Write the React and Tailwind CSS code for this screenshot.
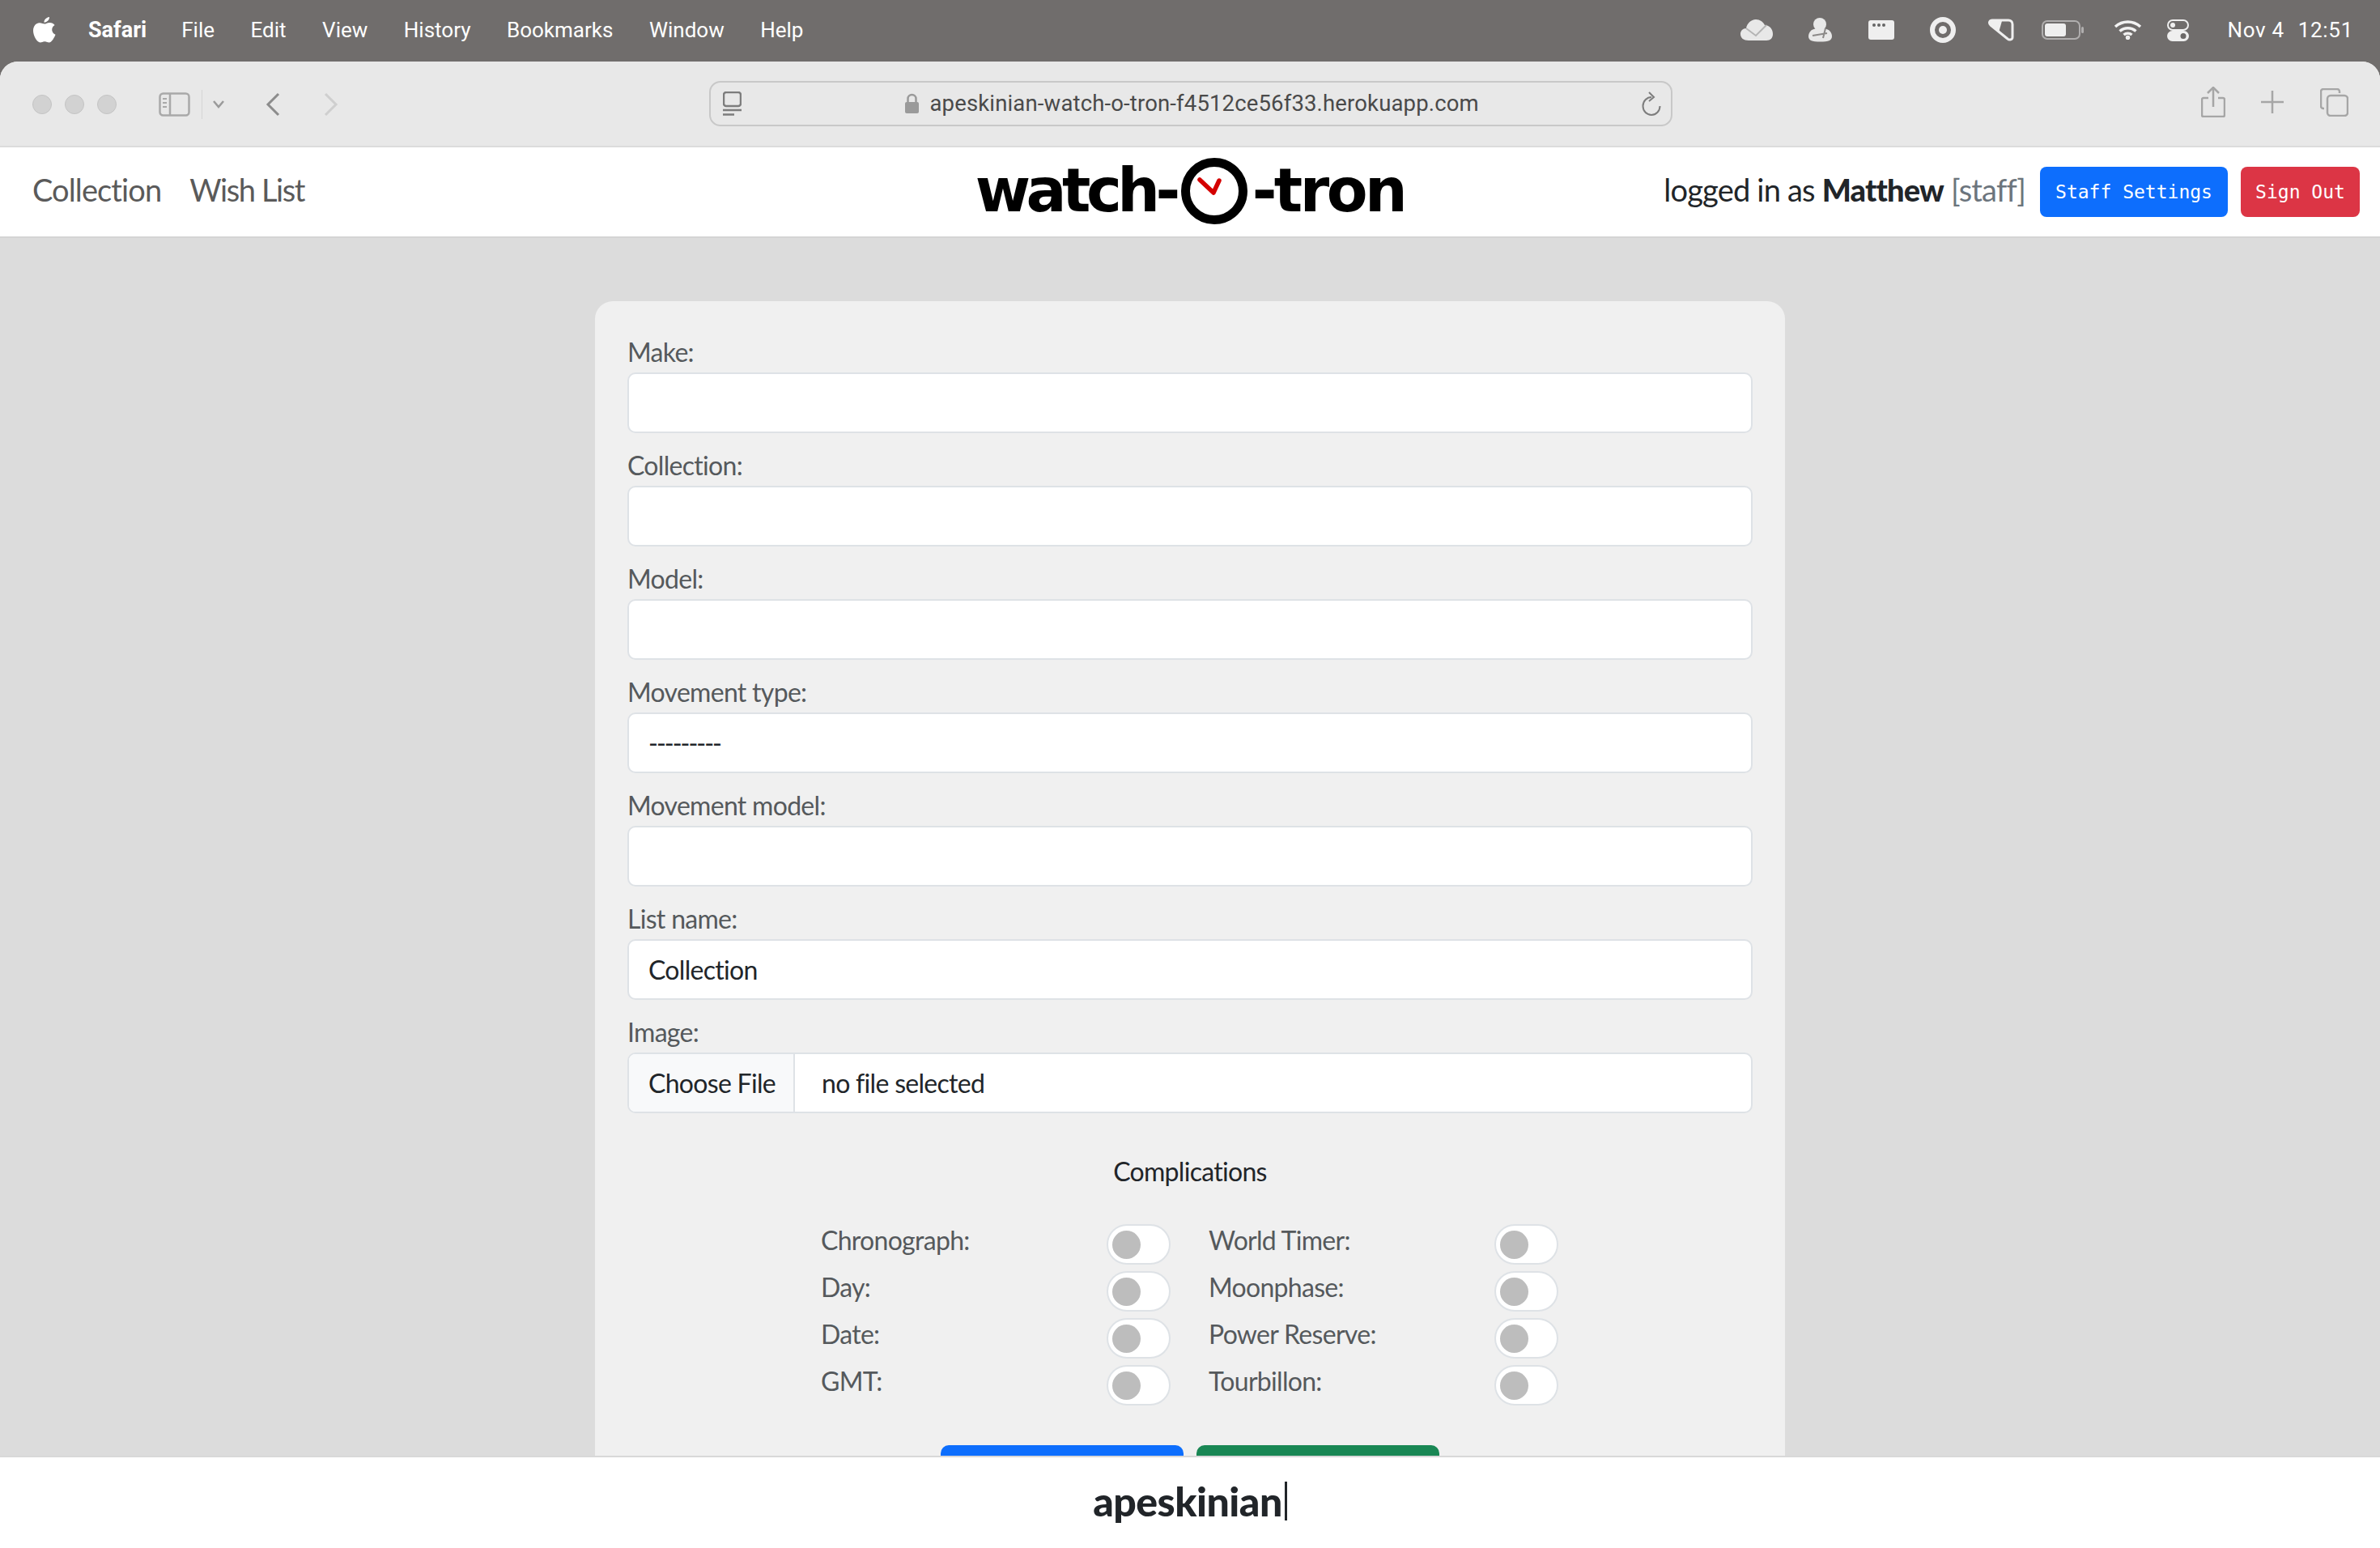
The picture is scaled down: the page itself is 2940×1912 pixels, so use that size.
const sans = "font-['Lato','Noto_Sans',sans-serif]";

function Field({ label, value, dash }) {
  return (
    <div className="flex flex-col">
      <label className="h-[65px] pt-[20px] text-[32px] leading-[40px] tracking-[-0.7px] text-[#55595c]">{label}</label>
      <div className={`flex h-[75px] items-center rounded-[10px] border-2 border-[#dee2e6] bg-white px-[24px] text-[32px] text-[#212529] ${dash ? "tracking-[-2px]" : "tracking-[-0.7px]"}`}>
        {value}
      </div>
    </div>
  );
}

function Toggle() {
  return (
    <div className="flex h-[50px] w-[79px] items-center rounded-full border-2 border-[#dee2e6] bg-white pl-[5px]">
      <div className="h-[35px] w-[35px] rounded-full bg-[#bdbdbd]" />
    </div>
  );
}

function Row({ label }) {
  return (
    <div className="flex h-[50px] w-[432px] items-start justify-between">
      <span className="text-[32px] leading-[40px] tracking-[-0.7px] text-[#55595c]">{label}</span>
      <Toggle />
    </div>
  );
}

const menu = ["File", "Edit", "View", "History", "Bookmarks", "Window", "Help"];

export default function App() {
  return (
    <div className={`flex h-[1912px] w-[2940px] flex-col overflow-hidden bg-[#706d6c] ${sans}`}>
      {/* menu bar */}
      <div className="flex h-[76px] shrink-0 items-center justify-between pb-[2px] pl-[41px] pr-[33px] font-['Roboto',sans-serif] text-[26px] text-white">
        <div className="flex items-center">
          <svg width="28" height="32" viewBox="0 0 28 32" fill="#fff">
            <path d="M20 0c.3 3-2.800 6.800-6.500 6.700C13.100 3.600 16.500.3 20 0zM14 8.600c1.500 0 3.600-1.700 6.400-1.700 2.500 0 4.800 1.200 6.200 3.200-5 3-4.200 9.600.9 11.700-1.300 3.400-4.600 9.700-7.800 9.700-2.100 0-3-1.300-5.500-1.300s-3.600 1.300-5.500 1.300C4.700 31.500 0 23 0 17 0 11 3.800 7.300 7.700 7.300c2.800 0 4.700 1.300 6.300 1.300z" />
          </svg>
          <span className="ml-[40px] text-[27px] font-bold">Safari</span>
          <div className="ml-[43px] flex gap-[44.500px]">
            {menu.map((m) => (
              <span key={m}>{m}</span>
            ))}
          </div>
        </div>
        <div className="flex items-center">
          <svg width="40" height="26" viewBox="0 0 40 26" fill="#e8e8e8"><path d="M10 26C4 26 0 23 0 18c0-4 3-7 7-7 1-6 6-11 12-11 5 0 9 3 11 7 6 0 10 5 10 11 0 5-3 8-8 8z" /><path d="M7 11l12 9 13-13" fill="none" stroke="#b5b5b5" strokeWidth="2" /></svg>
          <svg className="ml-[41px]" width="34" height="30" viewBox="0 0 34 30" fill="#e8e8e8"><circle cx="17" cy="8" r="8" /><path d="M6 16c3-4 20-4 23 0 4 4 4 10 0 12-5 2-18 2-23 0-4-2-4-8 0-12z" /><path d="M8 22l18-3M24 13l-3 12" stroke="#8b8988" strokeWidth="2" fill="none" /></svg>
          <svg className="ml-[43px]" width="32" height="24" viewBox="0 0 32 24"><rect width="32" height="24" rx="3" fill="#efefef" /><circle cx="7" cy="6" r="2" fill="#666" /><circle cx="13" cy="6" r="2" fill="#666" /><circle cx="19" cy="6" r="2" fill="#666" /></svg>
          <svg className="ml-[44px]" width="32" height="32" viewBox="0 0 32 32"><circle cx="16" cy="16" r="13" fill="none" stroke="#efefef" strokeWidth="6" /><circle cx="16" cy="16" r="5" fill="#efefef" /></svg>
          <svg className="ml-[40px]" width="32" height="28" viewBox="0 0 32 28" fill="none"><path d="M5 2h20c3 0 5 2 5 5v16c0 3-4 4-6 2L3 8C0 5 2 2 5 2z" stroke="#efefef" strokeWidth="3" strokeLinejoin="round" /><path d="M3 3h14l-4 14L3 7z" fill="#efefef" /></svg>
          <svg className="ml-[34px]" width="52" height="24" viewBox="0 0 52 24"><rect x="1" y="1" width="46" height="22" rx="6" fill="none" stroke="#b0aeae" strokeWidth="2" /><rect x="4" y="4" width="26" height="16" rx="3" fill="#efefef" /><rect x="49" y="8" width="3" height="8" rx="1.500" fill="#b0aeae" /></svg>
          <svg className="ml-[37px]" width="35" height="24" viewBox="0 0 35 24" fill="none" stroke="#f2f2f2" strokeWidth="3.500"><path d="M2 8c9-8 22-8 31 0" /><path d="M7.500 13.500c6-5 14-5 20 0" /><path d="M12.500 18c3-2.500 7-2.500 10 0" /><circle cx="17.500" cy="21.500" r="1" fill="#f2f2f2" /></svg>
          <svg className="ml-[31px]" width="27" height="27" viewBox="0 0 27 27"><rect x="1" y="1" width="25" height="12" rx="6" fill="none" stroke="#efefef" strokeWidth="2" /><circle cx="7" cy="7" r="3" fill="#efefef" /><rect y="14" width="27" height="13" rx="6.500" fill="#efefef" /><circle cx="20" cy="20.500" r="3.500" fill="#6b6867" /></svg>
          <span className="ml-[47px] tracking-[0.7px]">Nov 4</span>
          <span className="ml-[17px] tracking-[0.7px]">12:51</span>
        </div>
      </div>

      {/* window */}
      <div className="flex min-h-0 flex-1 flex-col overflow-hidden rounded-t-[22px] bg-white">
        {/* toolbar */}
        <div className="grid h-[106px] shrink-0 grid-cols-[1fr_1190px_1fr] items-start border-b-2 border-[#dcdcdc] bg-[#e8e8e8] pl-[40px] pr-[39px]">
          <div className="flex items-center pt-[35px]">
            <div className="flex gap-[16px]">
              <div className="h-[24px] w-[24px] rounded-full border border-[#c4c4c4] bg-[#d2d2d2]" />
              <div className="h-[24px] w-[24px] rounded-full border border-[#c4c4c4] bg-[#d2d2d2]" />
              <div className="h-[24px] w-[24px] rounded-full border border-[#c4c4c4] bg-[#d2d2d2]" />
            </div>
            <svg className="ml-[52px]" width="39" height="30" viewBox="0 0 39 30" fill="none" stroke="#a9a9a9" strokeWidth="2.500"><rect x="1.500" y="1.500" width="36" height="27" rx="4" /><path d="M14 2v26" /><path d="M5 8h5M5 13h5M5 18h5" strokeWidth="2" /></svg>
            <div className="ml-[14px] h-[36px] w-px bg-[#d6d6d6]" />
            <svg className="ml-[12px]" width="16" height="10" viewBox="0 0 16 10" fill="none" stroke="#9a9a9a" strokeWidth="2.500"><path d="M2 1l6 7 6-7" /></svg>
            <svg className="ml-[50px]" width="18" height="30" viewBox="0 0 18 30" fill="none" stroke="#8c8c8c" strokeWidth="3"><path d="M16 2L3 15l13 13" /></svg>
            <svg className="ml-[54px]" width="18" height="30" viewBox="0 0 18 30" fill="none" stroke="#cfcfcf" strokeWidth="3"><path d="M2 2l13 13L2 28" /></svg>
          </div>
          <div className="mt-[24px] flex h-[56px] items-center rounded-[14px] border-2 border-[#c8c8c8] pl-[15px] pr-[12px] font-['Roboto',sans-serif] text-[#4a4a4a]">
            <svg width="23" height="30" viewBox="0 0 23 30" fill="none"><rect x="1" y="1" width="21" height="17" rx="3" stroke="#7d7d7d" strokeWidth="2.500" /><path d="M0 23h23" stroke="#7d7d7d" strokeWidth="2.500" /><path d="M0 28.500h14" stroke="#7d7d7d" strokeWidth="2.500" /></svg>
            <svg className="ml-[201px]" width="19" height="26" viewBox="0 0 19 26"><path d="M4.500 11V7a5 5 0 0 1 10 0v4" fill="none" stroke="#9a9a9a" strokeWidth="2.500" /><rect x="1" y="11" width="17" height="14" rx="2" fill="#9a9a9a" /></svg>
            <span className="ml-[13px] text-[27.500px] tracking-[0.15px]">apeskinian-watch-o-tron-f4512ce56f33.herokuapp.com</span>
            <svg className="ml-auto" width="24" height="30" viewBox="0 0 24 30" fill="none" stroke="#7d7d7d" strokeWidth="2"><path d="M12 7a10.500 11 0 1 0 10.500 11" /><path d="M9 1l6 6-6 5" /></svg>
          </div>
          <div className="flex items-start justify-end pt-[31px]">
            <svg width="30" height="38" viewBox="0 0 30 38" fill="none" stroke="#a6a6a6" strokeWidth="2.500"><path d="M9 14H3a2 2 0 0 0-2 2v19a2 2 0 0 0 2 2h24a2 2 0 0 0 2-2V16a2 2 0 0 0-2-2h-6" /><path d="M15 25V2M8 8l7-7 7 7" /></svg>
            <svg className="ml-[44px] mt-[5px]" width="28" height="28" viewBox="0 0 28 28" stroke="#a6a6a6" strokeWidth="2.500"><path d="M14 0v28M0 14h28" /></svg>
            <svg className="ml-[45px] mt-[2px]" width="35" height="35" viewBox="0 0 35 35" fill="none" stroke="#a6a6a6" strokeWidth="2.500"><rect x="9" y="9" width="25" height="25" rx="4" /><path d="M5 25H4a3 3 0 0 1-3-3V4a3 3 0 0 1 3-3h17a3 3 0 0 1 3 3v2" /></svg>
          </div>
        </div>

        {/* site header */}
        <div className="grid h-[110px] shrink-0 grid-cols-[1fr_auto_1fr] items-center bg-white px-[25px]">
          <nav className="mb-[5px] flex gap-[35px] pl-[15px] text-[38px] tracking-[-0.9px] text-[#5a5a5a]">
            <span>Collection</span>
            <span className="tracking-[-1.4px]">Wish List</span>
          </nav>
          <div className="mb-[4px] flex items-center font-['DejaVu_Sans',sans-serif] text-[74px] font-bold leading-none text-black">
            <span className="tracking-[-5.5px]">watch-</span>
            <svg className="mx-[6px] mt-[2px]" width="82" height="82" viewBox="0 0 82 82" fill="none"><circle cx="41" cy="41" r="35.500" stroke="#000" strokeWidth="11" /><path d="M23 27l17 16 7-15" stroke="#d40000" strokeWidth="5.500" strokeLinecap="round" strokeLinejoin="round" /></svg>
            <span className="tracking-[-3.500px]">-tron</span>
          </div>
          <div className="flex items-center justify-end">
            <span className="mb-[5px] text-[38px] tracking-[-0.8px] text-[#212529]">
              logged in as <span className="font-black">Matthew</span> <span className="text-[#6c757d]">[staff]</span>
            </span>
            <div className="ml-[18px] flex h-[62px] w-[232px] items-center justify-center rounded-[8px] bg-[#0d6efd] font-['DejaVu_Sans_Mono',monospace] text-[23px] text-white">Staff Settings</div>
            <div className="ml-[16px] flex h-[62px] w-[147px] items-center justify-center rounded-[8px] bg-[#dc3545] font-['DejaVu_Sans_Mono',monospace] text-[23px] text-white">Sign Out</div>
          </div>
        </div>

        {/* page */}
        <div className="min-h-0 flex-1 overflow-hidden border-t-2 border-[#d4d4d4] bg-[#dcdcdc] pt-[78px]">
          <div className="mx-auto w-[1470px] rounded-t-[22px] bg-[#f0f0f0] px-[40px] pb-[40px] pt-[23px]">
            <Field label="Make:" />
            <Field label="Collection:" />
            <Field label="Model:" />
            <Field label="Movement type:" value="---------" dash />
            <Field label="Movement model:" />
            <Field label="List name:" value="Collection" />
            <div className="flex flex-col">
              <label className="h-[65px] pt-[20px] text-[32px] leading-[40px] tracking-[-0.7px] text-[#55595c]">Image:</label>
              <div className="flex h-[75px] items-stretch overflow-hidden rounded-[10px] border-2 border-[#dee2e6] bg-white text-[32px] tracking-[-0.7px] text-[#212529]">
                <div className="flex w-[205px] items-center border-r-2 border-[#dee2e6] bg-[#f8f9fa] pl-[24px]">Choose File</div>
                <div className="flex items-center pl-[33px]">no file selected</div>
              </div>
            </div>
            <div className="mt-[52px] text-center text-[32px] leading-[40px] tracking-[-0.7px] text-[#212529]">Complications</div>
            <div className="ml-[239px] mt-[45px] grid w-[911px] grid-cols-[432px_432px] gap-x-[47px] gap-y-[8px]">
              <Row label="Chronograph:" />
              <Row label="World Timer:" />
              <Row label="Day:" />
              <Row label="Moonphase:" />
              <Row label="Date:" />
              <Row label="Power Reserve:" />
              <Row label="GMT:" />
              <Row label="Tourbillon:" />
            </div>
            <div className="mt-[49px] flex justify-center gap-[16px]">
              <div className="h-[62px] w-[300px] rounded-[10px] bg-[#0d6efd]" />
              <div className="h-[62px] w-[300px] rounded-[10px] bg-[#198754]" />
            </div>
          </div>
        </div>

        {/* typed caption */}
        <div className="flex h-[114px] shrink-0 items-center justify-center border-t-2 border-[#d8d8d8] bg-white pb-[4px]">
          <span className="text-[50px] font-black leading-none tracking-[-0.5px] text-[#212529]">apeskinian</span>
          <span className="ml-[3px] h-[48px] w-[3px] bg-[#212529]" />
        </div>
      </div>
    </div>
  );
}
